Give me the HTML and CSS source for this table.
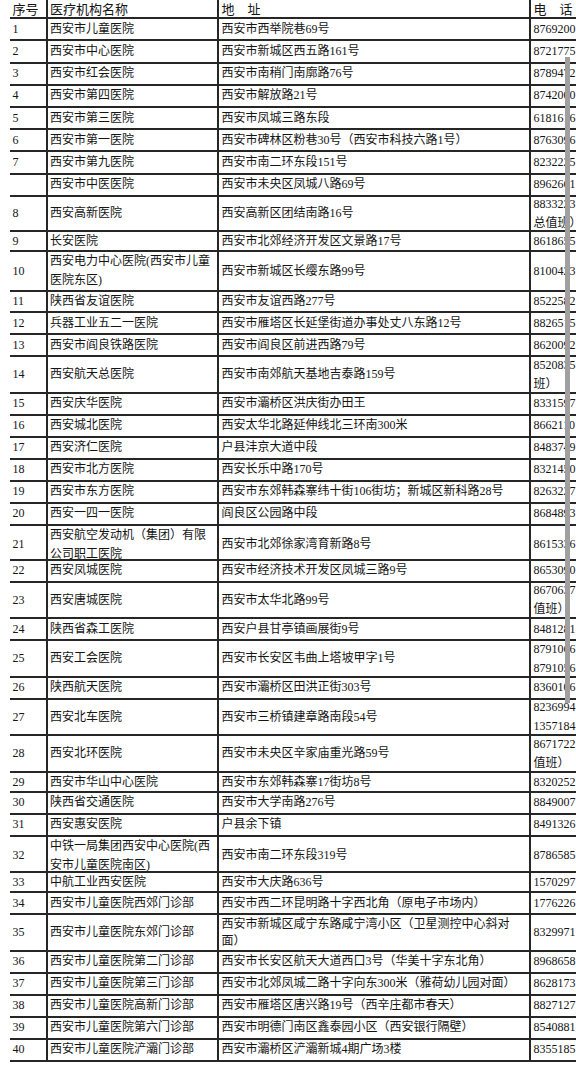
FILE: index.html
```html
<!DOCTYPE html>
<html lang="zh-CN">
<head>
<meta charset="utf-8">
<title>西安市医疗机构名录</title>
<link rel="stylesheet" href="styles.css">
</head>
<body>
<div class="sheet">
  <div class="row head"><div class="c no">序号</div><div class="c name">医疗机构名称</div><div class="c addr">地　址</div><div class="c tel">电　话</div></div>
  <div class="row top"><div class="c no">1</div><div class="c name">西安市儿童医院</div><div class="c addr">西安市西举院巷69号</div><div class="c tel">8769200</div></div>
  <div class="row top"><div class="c no">2</div><div class="c name">西安市中心医院</div><div class="c addr">西安市新城区西五路161号</div><div class="c tel">8721775</div></div>
  <div class="row top"><div class="c no">3</div><div class="c name">西安市红会医院</div><div class="c addr">西安市南稍门南廓路76号</div><div class="c tel">8789472</div></div>
  <div class="row top"><div class="c no">4</div><div class="c name">西安市第四医院</div><div class="c addr">西安市解放路21号</div><div class="c tel">8742000</div></div>
  <div class="row top"><div class="c no">5</div><div class="c name">西安市第三医院</div><div class="c addr">西安市凤城三路东段</div><div class="c tel">6181616</div></div>
  <div class="row top"><div class="c no">6</div><div class="c name">西安市第一医院</div><div class="c addr">西安市碑林区粉巷30号（西安市科技六路1号）</div><div class="c tel">8763096</div></div>
  <div class="row top"><div class="c no">7</div><div class="c name">西安市第九医院</div><div class="c addr">西安市南二环东段151号</div><div class="c tel">8232225</div></div>
  <div class="row top"><div class="c no"></div><div class="c name">西安市中医医院</div><div class="c addr">西安市未央区凤城八路69号</div><div class="c tel">8962661</div></div>
  <div class="row d d357"><div class="c no">8</div><div class="c name">西安高新医院</div><div class="c addr">西安高新区团结南路16号</div><div class="c tel">8833223<br>总值班）</div></div>
  <div class="row s20"><div class="c no">9</div><div class="c name">长安医院</div><div class="c addr">西安市北郊经济开发区文景路17号</div><div class="c tel">8618655</div></div>
  <div class="row d40"><div class="c no">10</div><div class="c name">西安电力中心医院(西安市儿童<br>医院东区)</div><div class="c addr">西安市新城区长缨东路99号</div><div class="c tel">8100423</div></div>
  <div class="row s21"><div class="c no">11</div><div class="c name">陕西省友谊医院</div><div class="c addr">西安市友谊西路277号</div><div class="c tel">8522582</div></div>
  <div class="row"><div class="c no">12</div><div class="c name">兵器工业五二一医院</div><div class="c addr">西安市雁塔区长延堡街道办事处丈八东路12号</div><div class="c tel">8826515</div></div>
  <div class="row"><div class="c no">13</div><div class="c name">西安市阎良铁路医院</div><div class="c addr">西安市阎良区前进西路79号</div><div class="c tel">8620092</div></div>
  <div class="row d"><div class="c no">14</div><div class="c name">西安航天总医院</div><div class="c addr">西安市南郊航天基地吉泰路159号</div><div class="c tel">8520835<br>班）</div></div>
  <div class="row"><div class="c no">15</div><div class="c name">西安庆华医院</div><div class="c addr">西安市灞桥区洪庆街办田王</div><div class="c tel">8331597</div></div>
  <div class="row"><div class="c no">16</div><div class="c name">西安城北医院</div><div class="c addr">西安太华北路延伸线北三环南300米</div><div class="c tel">8662110</div></div>
  <div class="row"><div class="c no">17</div><div class="c name">西安济仁医院</div><div class="c addr">户县沣京大道中段</div><div class="c tel">8483749</div></div>
  <div class="row"><div class="c no">18</div><div class="c name">西安市北方医院</div><div class="c addr">西安长乐中路170号</div><div class="c tel">8321450</div></div>
  <div class="row"><div class="c no">19</div><div class="c name">西安市东方医院</div><div class="c addr">西安市东郊韩森寨纬十街106街坊；新城区新科路28号</div><div class="c tel">8263227</div></div>
  <div class="row"><div class="c no">20</div><div class="c name">西安一四一医院</div><div class="c addr">阎良区公园路中段</div><div class="c tel">8684893</div></div>
  <div class="row d d35"><div class="c no">21</div><div class="c name">西安航空发动机（集团）有限<br>公司职工医院</div><div class="c addr">西安市北郊徐家湾育新路8号</div><div class="c tel">8615336</div></div>
  <div class="row"><div class="c no">22</div><div class="c name">西安凤城医院</div><div class="c addr">西安市经济技术开发区凤城三路9号</div><div class="c tel">8653090</div></div>
  <div class="row d"><div class="c no">23</div><div class="c name">西安唐城医院</div><div class="c addr">西安市太华北路99号</div><div class="c tel">8670637<br>值班）</div></div>
  <div class="row"><div class="c no">24</div><div class="c name">陕西省森工医院</div><div class="c addr">西安户县甘亭镇画展街9号</div><div class="c tel">8481281</div></div>
  <div class="row d"><div class="c no">25</div><div class="c name">西安工会医院</div><div class="c addr">西安市长安区韦曲上塔坡甲字1号</div><div class="c tel">8791066<br>8791056</div></div>
  <div class="row"><div class="c no">26</div><div class="c name">陕西航天医院</div><div class="c addr">西安市灞桥区田洪正街303号</div><div class="c tel">8360106</div></div>
  <div class="row d"><div class="c no">27</div><div class="c name">西安北车医院</div><div class="c addr">西安市三桥镇建章路南段54号</div><div class="c tel">8236994<br>1357184</div></div>
  <div class="row d"><div class="c no">28</div><div class="c name">西安北环医院</div><div class="c addr">西安市未央区辛家庙重光路59号</div><div class="c tel">8671722<br>值班）</div></div>
  <div class="row s20"><div class="c no">29</div><div class="c name">西安市华山中心医院</div><div class="c addr">西安市东郊韩森寨17街坊8号</div><div class="c tel">8320252</div></div>
  <div class="row"><div class="c no">30</div><div class="c name">陕西省交通医院</div><div class="c addr">西安市大学南路276号</div><div class="c tel">8849007</div></div>
  <div class="row"><div class="c no">31</div><div class="c name">西安惠安医院</div><div class="c addr">户县余下镇</div><div class="c tel">8491326</div></div>
  <div class="row d"><div class="c no">32</div><div class="c name">中铁一局集团西安中心医院(西<br>安市儿童医院南区)</div><div class="c addr">西安市南二环东段319号</div><div class="c tel">8786585</div></div>
  <div class="row s20"><div class="c no">33</div><div class="c name">中航工业西安医院</div><div class="c addr">西安市大庆路636号</div><div class="c tel">1570297</div></div>
  <div class="row"><div class="c no">34</div><div class="c name">西安市儿童医院西郊门诊部</div><div class="c addr">西安市西二环昆明路十字西北角（原电子市场内）</div><div class="c tel">1776226</div></div>
  <div class="row d"><div class="c no">35</div><div class="c name">西安市儿童医院东郊门诊部</div><div class="c addr tight">西安市新城区咸宁东路咸宁湾小区（卫星测控中心斜对<br>面）</div><div class="c tel">8329971</div></div>
  <div class="row"><div class="c no">36</div><div class="c name">西安市儿童医院第二门诊部</div><div class="c addr">西安市长安区航天大道西口3号（华美十字东北角）</div><div class="c tel">8968658</div></div>
  <div class="row"><div class="c no">37</div><div class="c name">西安市儿童医院第三门诊部</div><div class="c addr">西安市北郊凤城二路十字向东300米（雅荷幼儿园对面）</div><div class="c tel">8628173</div></div>
  <div class="row"><div class="c no">38</div><div class="c name">西安市儿童医院高新门诊部</div><div class="c addr">西安市雁塔区唐兴路19号（西辛庄都市春天）</div><div class="c tel">8827127</div></div>
  <div class="row"><div class="c no">39</div><div class="c name">西安市儿童医院第六门诊部</div><div class="c addr">西安市明德门南区鑫泰园小区（西安银行隔壁）</div><div class="c tel">8540881</div></div>
  <div class="row"><div class="c no">40</div><div class="c name">西安市儿童医院浐灞门诊部</div><div class="c addr">西安市灞桥区浐灞新城4期广场3楼</div><div class="c tel">8355185</div></div>
</div>
<div class="thumb"></div>
</body>
</html>
```

FILE: styles.css
```css
* {
  box-sizing: border-box;
}

html,
body {
  margin: 0;
  padding: 0;
  background: #ffffff;
  overflow: hidden;
}

body {
  position: relative;
  width: 576px;
  height: 1069px;
  font-family: "Liberation Serif", "Noto Sans CJK SC", serif;
  font-size: 12px;
  color: #141414;
}

.sheet {
  margin-left: 10px;
  width: 566px;
}

.row {
  display: grid;
  grid-template-columns: 36px 171px 312px 47px;
  height: 22px;
  border-bottom: 2px solid #262626;
}

.row.head {
  height: 19.3px;
  font-size: 13px;
}

.row.top {
  height: 22.2px;
}

.row.d {
  height: 36.5px;
}

.row.d357 {
  height: 35.7px;
}

.row.d35 {
  height: 35px;
}

.row.s20 {
  height: 20px;
}

.row.s21 {
  height: 21px;
}

.row.d40 {
  height: 40px;
}

.c {
  display: flex;
  align-items: center;
  white-space: nowrap;
  line-height: 19px;
  padding-left: 2px;
  min-width: 0;
}

.c.no {
  padding-left: 2.5px;
}

.c.name,
.c.addr,
.c.tel {
  border-left: 2px solid #262626;
}

.c.addr,
.c.tel {
  padding-left: 2.5px;
}

.c.tel {
  overflow: hidden;
}

.c.tight {
  line-height: 17px;
}

.thumb {
  position: absolute;
  left: 565px;
  top: 57px;
  width: 5px;
  height: 646px;
  background: #a0a0a0;
}
```
